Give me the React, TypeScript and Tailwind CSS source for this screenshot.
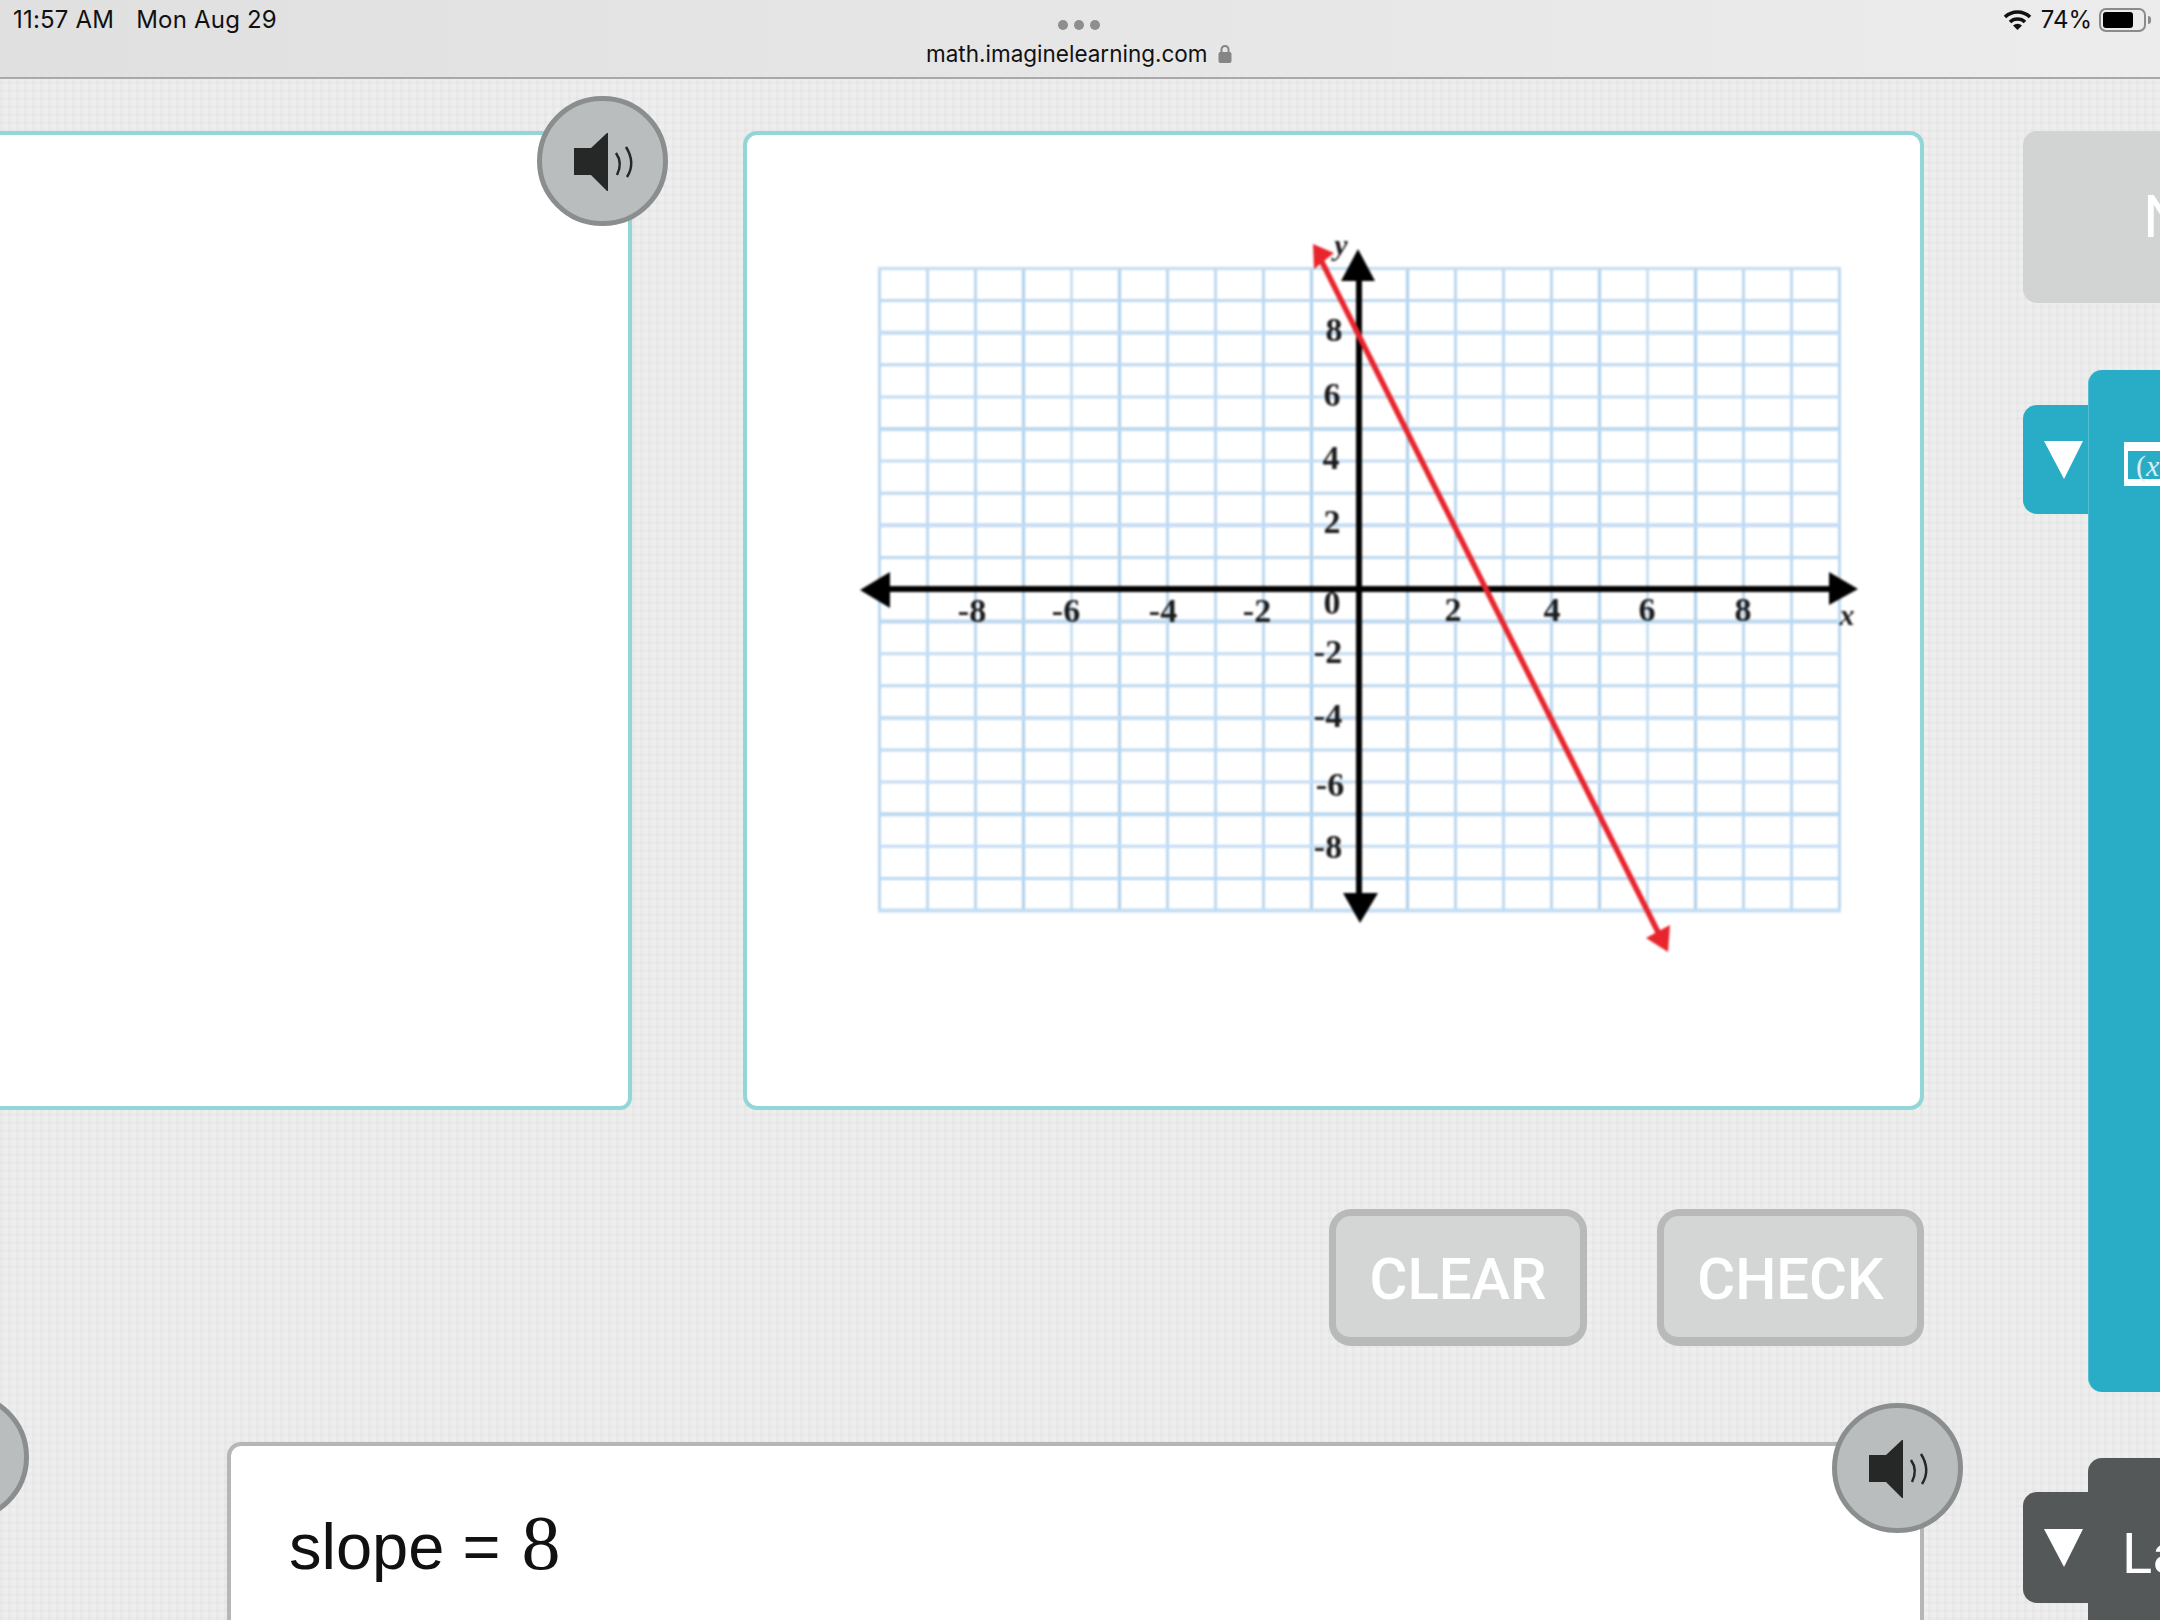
// Slope exercise screen as seen on an iPad: status bar, two cards, answer strip and side tabs.
const GRID_X = Array.from({ length: 21 }, (_, i) => 879.5 + i * 48);
const GRID_Y = Array.from({ length: 21 }, (_, i) => 268.5 + i * 32.1);

const LABELS: Array<[string, number, number]> = [
  ['8', 1334, 329], ['6', 1332, 394], ['4', 1331, 457], ['2', 1332, 521], ['0', 1332, 602],
  ['-2', 1328, 651], ['-4', 1328, 715], ['-6', 1330, 784], ['-8', 1328, 846],
  ['-8', 972, 610], ['-6', 1066, 610], ['-4', 1163, 610], ['-2', 1257, 610],
  ['2', 1453, 609], ['4', 1552, 609], ['6', 1647, 609], ['8', 1743, 609],
];

function SpeakerIcon() {
  return (
    <svg width="70" height="70" viewBox="-35 -35 70 70" fill="none">
      <path d="M-29 -13 H-12 L4 -28 H5 V30 H4 L-12 14 H-29 Z" fill="#262828" />
      <path d="M13 -8 Q20 2 14 14" stroke="#262828" strokeWidth="2.5" />
      <path d="M23 -14 Q33 2 24 16" stroke="#262828" strokeWidth="2.5" />
    </svg>
  );
}

function SpeakerButton({ className }: { className: string }) {
  return (
    <div className={`absolute z-10 flex h-[130px] w-[131px] items-center justify-center rounded-full border-[5px] border-[#8a8e8e] bg-[#b9bdbd] ${className}`}>
      <SpeakerIcon />
    </div>
  );
}

function Graph() {
  return (
    <svg width="1010" height="745" viewBox="855 215 1010 745" className="ml-[108px] mt-[80px] block blur-[0.9px]">
      {GRID_X.map((x, i) => (
        <line key={x} x1={x} x2={x} y1={267} y2={912} stroke={i % 3 === 1 ? '#bfdaf0' : '#aed0ec'} strokeWidth={i % 2 ? 3 : 2.5} />
      ))}
      {GRID_Y.map((y, i) => (
        <line key={y} x1={878} x2={1841} y1={y} y2={y} stroke={i % 2 ? '#bcd8ef' : '#c4dcf1'} strokeWidth={i % 3 === 2 ? 4 : 3} />
      ))}

      <rect x="880" y="586" width="960" height="6" fill="#000" />
      <rect x="1356" y="270" width="6" height="630" fill="#000" />
      <polygon points="860,590 890,572 890,608" fill="#000" />
      <polygon points="1858,589 1829,572 1829,605" fill="#000" />
      <polygon points="1358,249 1341,281 1375,281" fill="#000" />
      <polygon points="1360,923 1343,893 1378,893" fill="#000" />

      <line x1="1320" y1="258" x2="1660" y2="936" stroke="#e8242c" strokeWidth="5.5" />
      <polygon points="1313,244 1334,253 1314,269" fill="#e8242c" />
      <polygon points="1668,952 1646,938 1670,925" fill="#e8242c" />

      {LABELS.map(([text, x, y]) => (
        <text key={`${text}-${x}-${y}`} x={x} y={y + 12} textAnchor="middle" fontFamily="'Liberation Serif', serif" fontWeight="700" fontSize="34" fill="#1a1a1a">
          {text}
        </text>
      ))}
      <text x="1341" y="255" textAnchor="middle" fontFamily="'Liberation Serif', serif" fontStyle="italic" fontWeight="700" fontSize="30" fill="#1a1a1a">y</text>
      <text x="1847" y="625" textAnchor="middle" fontFamily="'Liberation Serif', serif" fontStyle="italic" fontWeight="700" fontSize="30" fill="#1a1a1a">x</text>
    </svg>
  );
}

function StatusBar() {
  return (
    <header className="relative flex h-[79px] shrink-0 items-start justify-between border-b-2 border-[#a9a9a9] bg-gradient-to-r from-[#e0e0e0] to-[#ececec] font-['Inter',sans-serif] text-[24px] leading-[29px] text-[#111]">
      <div className="ml-[13px] mt-[5px] flex gap-[22px] tracking-[0.2px]">
        <span>11:57 AM</span>
        <span>Mon Aug 29</span>
      </div>
      <div className="absolute left-[926px] top-[20px] flex flex-col items-center text-[22.5px]">
        <div className="mb-[9px] flex gap-[6px]">
          <span className="h-[10px] w-[10px] rounded-full bg-[#8e8e8e]" />
          <span className="h-[10px] w-[10px] rounded-full bg-[#8e8e8e]" />
          <span className="h-[10px] w-[10px] rounded-full bg-[#8e8e8e]" />
        </div>
        <div className="flex items-center gap-[10px]">
          <span>math.imaginelearning.com</span>
          <svg width="14" height="19" viewBox="0 0 14 19" fill="none">
            <path d="M3.5 9V5.5a3.5 3.5 0 0 1 7 0V9" stroke="#858585" strokeWidth="2" />
            <rect x="0.5" y="8" width="13" height="11" rx="2" fill="#858585" />
          </svg>
        </div>
      </div>
      <div className="mr-[9px] mt-[5px] flex items-center gap-[7px]">
        <svg width="29" height="21" viewBox="0 0 29 21" fill="none" className="mr-[2px]">
          <path d="M2 8 A18 18 0 0 1 27 8" stroke="#111" strokeWidth="3.6" />
          <path d="M7 13 A11 11 0 0 1 22 13" stroke="#111" strokeWidth="3.6" />
          <path d="M14.5 21 L10 16.5 A6.5 6.5 0 0 1 19 16.5 Z" fill="#111" />
        </svg>
        <span>74%</span>
        <div className="flex items-center">
          <div className="flex h-[24px] w-[47px] items-center rounded-[7px] border-2 border-[#8b8b8b] px-[2px]">
            <div className="h-[16px] w-[30px] rounded-[3px] bg-black" />
          </div>
          <div className="ml-[2px] h-[8px] w-[3px] rounded-r-full bg-[#8b8b8b]" />
        </div>
      </div>
    </header>
  );
}

function ActionButton({ label }: { label: string }) {
  return (
    <button className="flex h-[137px] items-center justify-center rounded-[22px] border-[7px] border-b-[9px] border-[#b8baba] bg-[#d4d6d6] pt-[5px] font-['Roboto',sans-serif] text-[58px] font-medium text-white first:w-[258px] last:w-[267px]">
      {label}
    </button>
  );
}

function TriangleTab({ className }: { className: string }) {
  return (
    <div className={`flex w-[65px] shrink-0 items-center rounded-l-[14px] pl-[21px] ${className}`}>
      <svg width="40" height="40" viewBox="0 0 40 40">
        <polygon points="0,1 39,1 20,39" fill="#fff" />
      </svg>
    </div>
  );
}

export default function App() {
  return (
    <div className="flex h-[1620px] w-[2160px] flex-col overflow-hidden bg-[#eeeeee] bg-[image:repeating-linear-gradient(90deg,rgba(0,0,0,0.018)_0px,rgba(0,0,0,0.018)_3px,transparent_3px,transparent_8px),repeating-linear-gradient(0deg,rgba(0,0,0,0.014)_0px,rgba(0,0,0,0.014)_3px,transparent_3px,transparent_8px)]">
      <StatusBar />
      <main className="flex min-h-0 flex-1">
        <div className="flex w-[2023px] shrink-0 flex-col pt-[52px]">
          <div className="flex gap-[111px]">
            <div className="relative h-[979px] w-[632px] rounded-br-[12px] border-y-4 border-r-4 border-[#93d6da] bg-white">
              <SpeakerButton className="right-[-40px] top-[-39px]" />
            </div>
            <div className="h-[979px] w-[1181px] rounded-[14px] border-4 border-[#93d6da] bg-white">
              <Graph />
            </div>
          </div>

          <div className="mt-[99px] flex justify-end gap-[70px] pr-[99px]">
            <ActionButton label="CLEAR" />
            <ActionButton label="CHECK" />
          </div>

          <div className="relative ml-[227px] mt-[96px] min-h-0 w-[1697px] flex-1">
            <SpeakerButton className="left-[-329px] top-[-50px]" />
            <div className="h-[260px] rounded-[14px] border-4 border-[#b5b7b7] bg-white pl-[58px] pt-[50px] font-['Liberation_Sans',sans-serif] text-[65px] leading-[94px] text-[#111]">
              slope = <span className="ml-[3px] font-['Liberation_Serif',serif] text-[78px]">8</span>
            </div>
            <SpeakerButton className="right-[-39px] top-[-39px]" />
          </div>
        </div>

        <aside className="w-[137px] shrink-0 pt-[52px]">
          <div className="flex h-[172px] w-[200px] items-center rounded-[14px] bg-[#d2d4d4] pl-[120px] font-['Roboto',sans-serif] text-[60px] text-white">
            N
          </div>

          <div className="mt-[67px] flex items-start">
            <TriangleTab className="mt-[35px] h-[109px] bg-[#29acc5]" />
            <div className="h-[1022px] w-[200px] rounded-l-[14px] border-l border-[#55bed2] bg-[#29acc5] pl-[35px] pt-[72px]">
              <div className="flex h-[44px] w-[80px] items-center border-x-[4px] border-b-[7px] border-t-[9px] border-white pl-[8px] font-['Liberation_Serif',serif] text-[30px] text-[#d8eff4]">
                (<span className="italic">x</span>)
              </div>
            </div>
          </div>

          <div className="mt-[66px] flex items-start">
            <TriangleTab className="mt-[34px] h-[111px] bg-[#555858]" />
            <div className="h-[300px] w-[200px] rounded-l-[14px] bg-[#555858] pl-[34px] pt-[56px] font-['Roboto',sans-serif] text-[56px] leading-[80px] text-white">
              La
            </div>
          </div>
        </aside>
      </main>
    </div>
  );
}
